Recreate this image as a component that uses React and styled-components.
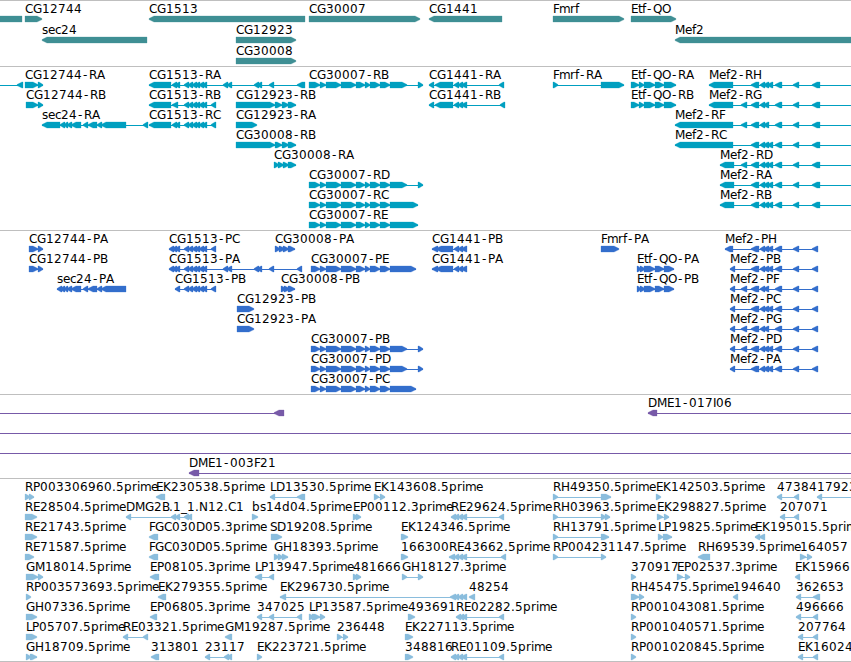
import React from 'react'
import styled, { createGlobalStyle } from 'styled-components'

// horizontal advance of each label glyph, in whole pixels
const ADVANCE = {
	A: 9, B: 7, C: 8, D: 9, E: 7, F: 6, G: 9, H: 9, I: 3, K: 8, L: 6, M: 10,
	N: 9, O: 9, P: 7, Q: 9, R: 8, S: 7, b: 8, c: 6, d: 8, e: 7, f: 4, i: 3,
	m: 11, p: 8, r: 5, s: 6, t: 4, '.': 4, '-': 7, _: 6,
}

const EDGE = 860

const glyphPositions = (name, x) => {
	let pen = x
	return [...name]
		.map((char) => {
			// the hyphen is narrow, so it is centred in its cell
			const at = char === '-' ? pen + 1 : pen
			pen += ADVANCE[char] || 8
			return at
		})
		.join(' ')
}

// feature: [label, x, strand, blocks, lineEnd, lineStart]
const R = 1
const L = -1

const SEC24 = [[71, 81], [83, 88], [88, 97], [97, 102], [101, 126]]
const CG1513_MID = [[184, 189], [188, 193], [192, 197], [195, 200], [199, 204], [202, 207]]
const CG1513_FAR = [[223, 228], [227, 232], [254, 259], [257, 262], [269, 274]]
const CG30007 = [[320, 326], [326, 341], [341, 356], [356, 365], [365, 370], [370, 380], [380, 390]]
const CG30007_SPLIT = [...CG30007, [390, 407], [418, 423]]
const CG1441 = [[454, 459], [458, 463], [461, 467]]
const CG12923 = [[236, 275], [275, 282], [282, 289], [288, 296]]
const ETF = [[644, 655], [655, 664]]
const MEF_A = [[751, 759], [760, 765], [763, 769], [767, 773], [775, 782], [793, 799]]
const MEF_B = [[741, 747], [751, 759], [760, 765], [763, 769], [775, 782], [793, 799]]
const MEF_C = [[741, 747], ...MEF_A]
const MEF_END = [812, 820]
const MEF_CODING_END = [812, 818]
const RE_CLUSTER = [[454, 459], [458, 463], [461, 467]]

const genes = [
	[
		['', 0, 0, [[0, 22]]],
		['CG12744', 25, R, [[25, 42]]],
		['CG1513', 149, L, [[149, 305]]],
		['CG30007', 309, R, [[309, 420]]],
		['CG1441', 429, L, [[429, 502]]],
		['Fmrf', 553, R, [[553, 624]]],
		['Etf-QO', 631, R, [[631, 676]]],
	],
	[
		['sec24', 42, L, [[42, 147]]],
		['CG12923', 236, R, [[236, 296]]],
		['Mef2', 675, L, [[675, EDGE]]],
	],
	[['CG30008', 236, R, [[236, 296]]]],
]

const transcripts = [
	[
		['', 0, L, [[17, 23]], 23, 0],
		['CG12744-RA', 25, R, [[25, 38], [38, 43]]],
		['CG1513-RA', 149, L, [[149, 171], [172, 177], [175, 180], ...CG1513_MID, ...CG1513_FAR, [297, 305]]],
		['CG30007-RB', 309, R, [[309, 320], ...CG30007_SPLIT]],
		['CG1441-RA', 429, L, [[429, 434], [435, 453], ...CG1441, [499, 504]]],
		['Fmrf-RA', 553, R, [[553, 558], [601, 624]]],
		['Etf-QO-RA', 631, R, [[631, 639], [639, 644], ...ETF, [664, 676]]],
		['Mef2-RH', 709, L, [[709, 733], ...MEF_A, MEF_END], EDGE],
	],
	[
		['CG12744-RB', 26, R, [[26, 38], [38, 43]]],
		['CG1513-RB', 149, L, [[149, 171], [172, 178], ...CG1513_MID, [211, 216]]],
		['CG12923-RB', 236, R, CG12923],
		['CG1441-RB', 429, L, [[429, 434], [435, 453], ...CG1441, [500, 505]]],
		['Etf-QO-RB', 631, R, [[631, 639], [639, 644], ...ETF, [664, 676]]],
		['Mef2-RG', 709, L, [[709, 733], ...MEF_B, MEF_END], EDGE],
	],
	[
		['sec24-RA', 42, L, [[42, 60], [60, 65], [64, 68], [67, 72], ...SEC24, [143, 148]]],
		['CG1513-RC', 149, L, [[149, 171], [172, 177], [175, 180], ...CG1513_MID, [211, 216]]],
		['CG12923-RA', 236, R, [[236, 257]]],
		['Mef2-RF', 675, L, [[675, 733], ...MEF_B, MEF_END], EDGE],
	],
	[
		['CG30008-RB', 236, R, CG12923],
		['Mef2-RC', 675, L, [[675, 733], ...MEF_A, MEF_END], EDGE],
	],
	[
		['CG30008-RA', 274, R, [[274, 279], [278, 284], [283, 289], [288, 296]]],
		['Mef2-RD', 720, L, [[720, 734], ...MEF_C, MEF_END], EDGE],
	],
	[
		['CG30007-RD', 309, R, [[309, 320], ...CG30007_SPLIT]],
		['Mef2-RA', 720, L, [[720, 734], ...MEF_A, MEF_END], EDGE],
	],
	[
		['CG30007-RC', 309, R, [[309, 320], ...CG30007, [390, 418]]],
		['Mef2-RB', 720, L, [[720, 734], ...MEF_A, MEF_END], EDGE],
	],
	[['CG30007-RE', 309, R, [[309, 320], ...CG30007, [390, 418]]]],
]

const proteins = [
	[
		['CG12744-PA', 29, R, [[29, 38], [38, 43]]],
		['CG1513-PC', 169, L, [[169, 174], [172, 177], [175, 180], ...CG1513_MID, [211, 216]]],
		['CG30008-PA', 275, R, [[275, 280], [279, 285], [283, 289], [288, 295]]],
		['CG1441-PB', 432, L, [[432, 438], [436, 453], ...CG1441]],
		['Fmrf-PA', 601, R, [[601, 619]]],
		['Mef2-PH', 725, L, [[725, 733], ...MEF_A, MEF_CODING_END]],
	],
	[
		['CG12744-PB', 29, R, [[29, 38], [38, 43]]],
		['CG1513-PA', 169, L, [[169, 174], [172, 177], [175, 180], ...CG1513_MID, ...CG1513_FAR, [297, 302]]],
		['CG30007-PE', 311, R, [[311, 320], ...CG30007, [390, 416]]],
		['CG1441-PA', 432, L, [[432, 438], [436, 453], ...CG1441]],
		['Etf-QO-PA', 637, R, [[637, 641], [640, 645], ...ETF, [664, 674]]],
		['Mef2-PB', 730, L, [[730, 735], ...MEF_A, MEF_CODING_END]],
	],
	[
		['sec24-PA', 57, L, [[57, 62], [60, 65], [64, 68], [67, 72], ...SEC24]],
		['CG1513-PB', 175, L, [[175, 180], ...CG1513_MID, [211, 216]]],
		['CG30008-PB', 281, R, [[281, 286], [284, 290], [288, 295]]],
		['Etf-QO-PB', 637, R, [[637, 641], [640, 645], ...ETF, [664, 674]]],
		['Mef2-PF', 730, L, [[730, 735], ...MEF_B, MEF_CODING_END]],
	],
	[
		['CG12923-PB', 237, R, [[237, 254]]],
		['Mef2-PC', 730, L, [[730, 735], ...MEF_A, MEF_CODING_END]],
	],
	[
		['CG12923-PA', 237, R, [[237, 254]]],
		['Mef2-PG', 730, L, [[730, 735], ...MEF_B, MEF_CODING_END]],
	],
	[
		['CG30007-PB', 311, R, [[311, 320], ...CG30007_SPLIT]],
		['Mef2-PD', 730, L, [[730, 735], ...MEF_C, MEF_CODING_END]],
	],
	[
		['CG30007-PD', 311, R, [[311, 320], ...CG30007_SPLIT]],
		['Mef2-PA', 730, L, [[730, 735], ...MEF_A, MEF_CODING_END]],
	],
	[['CG30007-PC', 311, R, [[311, 320], ...CG30007, [390, 416]]]],
]

const clones = [
	[
		['', 0, L, [[274, 284]], 284, 0],
		['DME1-017I06', 648, L, [[648, 657]], EDGE],
	],
	[['', 0, L, [], EDGE, 0]],
	[['', 0, L, [], EDGE, 0]],
	[['DME1-003F21', 189, L, [[189, 199]], EDGE]],
]

const ests = [
	[
		['RP003306960.5prime', 25, R, [[25, 30], [29, 34]]],
		['EK230538.5prime', 156, L, [[156, 165]]],
		['LD13530.5prime', 270, L, [[270, 275], [297, 305]]],
		['EK143608.5prime', 374, R, [[374, 379], [380, 385]]],
		['RH49350.5prime', 553, R, [[553, 558], [601, 611]]],
		['EK142503.5prime', 656, R, [[656, 661]]],
		['47384', 777, L, [[777, 782], [794, 799]]],
		['17923', 817, L, [[817, 822]], EDGE],
	],
	[
		['RE28504.5prime', 25, R, [[25, 37]]],
		['DMG2B.1_1.N12.C1', 126, L, [[126, 131], [171, 176], [175, 180], [184, 189], [187, 192]]],
		['bs14d04.5prime', 252, R, [[252, 258]]],
		['EP00112.3prime', 353, R, [[353, 358], [356, 361]]],
		['RE29624.5prime', 451, L, [[451, 456], ...RE_CLUSTER, [499, 504]]],
		['RH03963.5prime', 553, R, [[553, 558], [601, 606], [605, 610]]],
		['EK298827.5prime', 657, R, [[657, 663], [664, 669]]],
		['207071', 780, L, [[780, 785], [794, 799]]],
	],
	[
		['RE21743.5prime', 25, R, [[25, 37]]],
		['FGC030D05.3prime', 149, L, [[149, 158]]],
		['SD19208.5prime', 270, R, [[271, 282]]],
		['EK124346.5prime', 401, R, [[401, 408]]],
		['RH13791.5prime', 553, R, [[553, 558], [601, 609]]],
		['LP19825.5prime', 658, R, [[658, 663], [663, 672]]],
		['EK195015.5prime', 755, L, [[755, 760], [759, 765]]],
	],
	[
		['RE71587.5prime', 25, R, [[25, 34]]],
		['FGC030D05.5prime', 149, L, [[149, 158]]],
		['GH18393.5prime', 274, R, [[274, 279], [278, 283], [282, 288]]],
		['166300', 401, R, [[401, 408]]],
		['RE43662.5prime', 449, L, [[449, 455], ...RE_CLUSTER, [501, 506]]],
		['RP004231147.5prime', 553, R, [[553, 558], [601, 606]]],
		['RH69539.5prime', 698, L, [[698, 710]]],
		['164057', 800, R, [[800, 806], [807, 812]]],
	],
	[
		['GM18014.5prime', 26, R, [[26, 38], [38, 43]]],
		['EP08105.3prime', 150, L, [[150, 159]]],
		['LP13947.5prime', 255, L, [[255, 262], [269, 274]]],
		['481666', 353, R, [[353, 358], [356, 361]]],
		['GH18127.3prime', 402, R, [[402, 407], [418, 423]]],
		['370917', 631, R, [[631, 636]]],
		['EP02537.3prime', 677, R, [[677, 683], [685, 690]]],
		['EK15966', 795, L, [[795, 800]]],
	],
	[
		['RP003573693.5prime', 26, R, [[26, 31]]],
		['EK279355.5prime', 158, L, [[158, 166]]],
		['EK296730.5prime', 280, L, [[280, 286], [450, 456], ...RE_CLUSTER]],
		['48254', 469, L, [[469, 475]]],
		['RH45475.5prime', 631, R, [[631, 639], [639, 644]]],
		['194640', 733, L, [[733, 738]]],
		['362653', 796, L, [[796, 801], [813, 820]]],
	],
	[
		['GH07336.5prime', 26, R, [[26, 37]]],
		['EP06805.3prime', 150, L, [[150, 157]]],
		['347025', 257, L, [[257, 262], [269, 274], [297, 302]]],
		['LP13587.5prime', 309, R, [[309, 314], [312, 320], [320, 325]]],
		['493691', 408, R, [[408, 415]]],
		['RE02282.5prime', 456, L, [[456, 461], [459, 464], [462, 467], [499, 504]]],
		['RP001043081.5prime', 631, R, [[631, 636]]],
		['496666', 796, L, [[796, 801], [813, 818]]],
	],
	[
		['LP05707.5prime', 26, R, [[26, 37]]],
		['RE03321.5prime', 123, L, [[123, 128], [143, 148]]],
		['GM19287.5prime', 225, L, [[225, 232]]],
		['236448', 337, R, [[337, 342], [343, 348]]],
		['EK227113.5prime', 405, R, [[405, 413]]],
		['RP001040571.5prime', 631, R, [[631, 636]]],
		['207764', 798, L, [[798, 803], [813, 818]]],
	],
	[
		['GH18709.5prime', 26, R, [[26, 31], [30, 37]]],
		['313801', 151, L, [[151, 159]]],
		['23117', 205, L, [[205, 210], [224, 229], [227, 232]]],
		['EK223721.5prime', 257, R, [[257, 262]]],
		['348816', 405, R, [[405, 413]]],
		['RE01109.5prime', 451, L, [[451, 456], ...RE_CLUSTER, [499, 504]]],
		['RP001020845.5prime', 631, R, [[631, 636]]],
		['EK16024', 798, L, [[798, 803], [813, 818]]],
	],
]

const tracks = [
	{ id: 'genes', color: '#3f8f94', laneHeight: 21, gap: 2, lanes: genes },
	{ id: 'transcripts', color: '#009fc0', laneHeight: 20, gap: 3, lanes: transcripts },
	{ id: 'proteins', color: '#336ecc', laneHeight: 20, gap: 3, lanes: proteins },
	{ id: 'clones', color: '#775aa8', laneHeight: 20, gap: 3, lanes: clones },
	{ id: 'ests', color: '#8abddd', laneHeight: 20, gap: 2, lanes: ests },
]

const blockPoints = (x0, x1, strand) => {
	if (strand === 0) return `${x0},15 ${x1},15 ${x1},21 ${x0},21`
	const head = Math.min(5, x1 - x0 - 1)
	if (strand === R) {
		const neck = x1 - head
		return `${x0},15 ${neck},15 ${x1},17.6 ${x1},18.6 ${neck},21 ${x0},21`
	}
	const neck = x0 + head
	return `${x1},15 ${neck},15 ${x0},17.6 ${x0},18.6 ${neck},21 ${x1},21`
}

const Feature = ({ feature }) => {
	const [name, x, strand, blocks, lineEnd, lineStart = x] = feature
	const end = lineEnd || blocks[blocks.length - 1][1]
	const hasLine = lineEnd || blocks.length > 1
	return (
		<g>
			{hasLine && <Connector x={lineStart} y='18' width={end - lineStart} height='1' />}
			{blocks.map(([x0, x1]) => (
				<Block key={x0} points={blockPoints(x0, x1, strand)} />
			))}
			{name && (
				<Label x={glyphPositions(name, x)} y='12'>
					{name}
				</Label>
			)}
		</g>
	)
}

const App = () => {
	return (
		<Browser>
			<GlobalStyle />
			{tracks.map((track) => (
				<Track key={track.id} $color={track.color} $gap={track.gap}>
					{track.lanes.map((lane, i) => (
						<Lane key={i} $height={track.laneHeight}>
							{lane.map((feature, j) => (
								<Feature key={j} feature={feature} />
							))}
						</Lane>
					))}
				</Track>
			))}
		</Browser>
	)
}

export default App

const GlobalStyle = createGlobalStyle`
	body {
		margin: 0;
		background: #ffffff;
	}
`
const Browser = styled.main`
	display: flex;
	flex-direction: column;
	width: 851px;
	overflow: hidden;
	border-bottom: 1px solid #bfbfbf;
`
const Track = styled.section`
	display: flex;
	flex-direction: column;
	padding-bottom: ${({ $gap }) => $gap}px;
	border-top: 1px solid #bfbfbf;
	color: ${({ $color }) => $color};
`
const Lane = styled.svg`
	display: block;
	width: 100%;
	height: ${({ $height }) => $height}px;
	overflow: visible;
`
const Connector = styled.rect`
	fill: currentColor;
`
const Block = styled.polygon`
	fill: currentColor;
	stroke: currentColor;
	stroke-width: 0.3px;
`
const Label = styled.text`
	fill: #000000;
	font-family: 'DejaVu Sans', sans-serif;
	font-size: 12px;
`
